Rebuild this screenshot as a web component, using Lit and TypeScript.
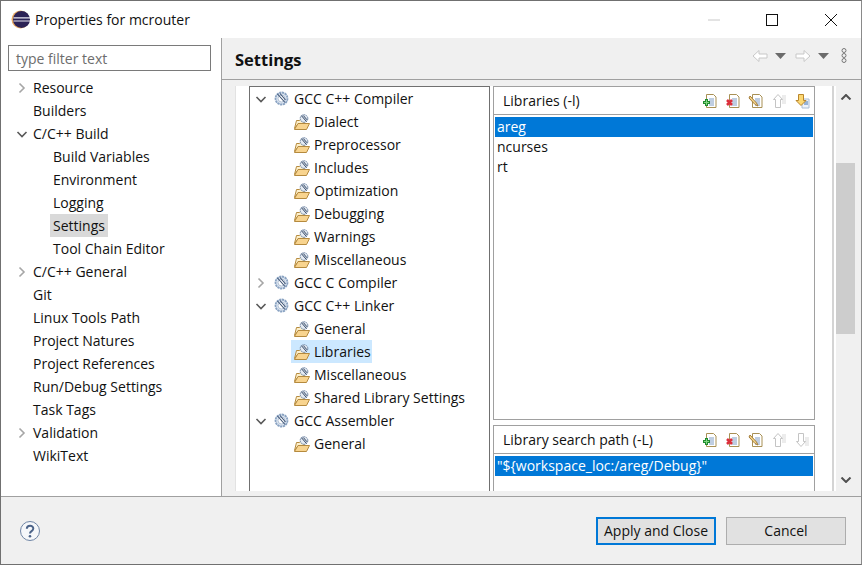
import { LitElement, css, html, svg } from "lit";
import { customElement } from "lit/decorators.js";

const chevronRight = html`<svg class="tw" width="12" height="12" viewBox="0 0 12 12"><path d="M3.500 1.500 8 6l-4.500 4.500" fill="none" stroke="#a6a6a6" stroke-width="1.600"/></svg>`;
const chevronDown = html`<svg class="tw" width="12" height="12" viewBox="0 0 12 12"><path d="M1.500 4 6 8.500 10.500 4" fill="none" stroke="#595959" stroke-width="1.600"/></svg>`;

const toolIcon = html`<svg class="ico" width="15" height="15" viewBox="0 0 15 15">
  <circle cx="7.500" cy="7.500" r="6" fill="#dbe4f0" stroke="#8aa3c2" stroke-width="1.800" stroke-dasharray="2.200 .6"/>
  <circle cx="7.500" cy="7.500" r="3.500" fill="#fff" stroke="#b4c3d6"/>
  <path d="M3.500 3 11 11.500M6 2.500l5.500 6.500" stroke="#3d5374" stroke-width="1.100"/>
</svg>`;

const optionIcon = html`<svg class="ico" width="16" height="16" viewBox="0 0 16 16">
  <path d="M.5 14.500 2.500 6.500h3L7 5h3v5H4z" fill="#fdf0cc" stroke="#b58a3e"/>
  <path d="M.5 15.500 4 9.500h11.500l-3 6z" fill="#f8d48f" stroke="#b58a3e"/>
  <circle cx="10" cy="4.500" r="3.800" fill="#e4eaf2" stroke="#6e85a3" stroke-dasharray="1.800 .6"/>
  <path d="M7.500 1.800 12.500 7.500M9.300 1.500l3.700 4.300" stroke="#2f4462"/>
</svg>`;

type Kind = "add" | "del" | "edit" | "up" | "down";

function actionIcon(kind: Kind, off = false) {
  const page = svg`
    <path d="M4.500 1.500h7l2.500 2.500v10.500H4.500z" fill="#fff" stroke="#a89055"/>
    <path d="M7 6h5M7 8h5M7 10h5M7 12h5" stroke="#7f9cc4"/>`;
  const hollow = "#c4c4c4";
  const glyph =
    kind === "add"
      ? svg`${page}<path d="M4.500 6v7M1 9.500h7" stroke="#1f8a2e" stroke-width="3"/><path d="M4.500 7v5M2 9.500h5" stroke="#7fd67f"/>`
      : kind === "del"
      ? svg`${page}<path d="M2 7l5 5M7 7l-5 5" stroke="#dc2f3c" stroke-width="2.600"/>`
      : kind === "edit"
      ? svg`${page}<path d="M2 3l6.500 7 1.500 3-3-1.500L1 5z" fill="#f5d58a" stroke="#a37c3a"/>`
      : kind === "up"
      ? svg`<path d="M11 2h4v9h-4z" fill="#ececec"/><path d="M7 1.500 11.500 6.500H9.500v8h-5v-8H2.500z" fill="#fff" stroke="${hollow}"/>`
      : off
      ? svg`<path d="M11 5h4v9h-4z" fill="#ececec"/><path d="M4.500 1.500h5v8h2L7 14.500 2.500 9.500h2z" fill="#fff" stroke="${hollow}"/>`
      : svg`<path d="M8 6h7v9H8z" fill="#eef3fa" stroke="#a9bcd6"/><path d="M10 9h4M10 11h4" stroke="#3f73b5"/><path d="M4.500 1.500h5v6h2.500L7 12.500 2 7.500h2.500z" fill="#fcd874" stroke="#b9862c"/>`;
  return html`<svg class="act" width="16" height="16" viewBox="0 0 16 16">${glyph}</svg>`;
}

const actions = (upOff: boolean, downOff: boolean) => html`
  <div class="actions">
    ${actionIcon("add")}${actionIcon("del")}${actionIcon("edit")}
    ${actionIcon("up", upOff)}${actionIcon("down", downOff)}
  </div>
`;

const navItems: [string, number, "r" | "d" | ""][] = [
  ["Resource", 0, "r"],
  ["Builders", 0, ""],
  ["C/C++ Build", 0, "d"],
  ["Build Variables", 1, ""],
  ["Environment", 1, ""],
  ["Logging", 1, ""],
  ["Settings", 1, ""],
  ["Tool Chain Editor", 1, ""],
  ["C/C++ General", 0, "r"],
  ["Git", 0, ""],
  ["Linux Tools Path", 0, ""],
  ["Project Natures", 0, ""],
  ["Project References", 0, ""],
  ["Run/Debug Settings", 0, ""],
  ["Task Tags", 0, ""],
  ["Validation", 0, "r"],
  ["WikiText", 0, ""],
];

const toolItems: [string, number, "r" | "d" | ""][] = [
  ["GCC C++ Compiler", 0, "d"],
  ["Dialect", 1, ""],
  ["Preprocessor", 1, ""],
  ["Includes", 1, ""],
  ["Optimization", 1, ""],
  ["Debugging", 1, ""],
  ["Warnings", 1, ""],
  ["Miscellaneous", 1, ""],
  ["GCC C Compiler", 0, "r"],
  ["GCC C++ Linker", 0, "d"],
  ["General", 1, ""],
  ["Libraries", 1, ""],
  ["Miscellaneous", 1, ""],
  ["Shared Library Settings", 1, ""],
  ["GCC Assembler", 0, "d"],
  ["General", 1, ""],
];

@customElement("app-root")
export class AppRoot extends LitElement {
  static styles = css`
    :host {
      display: block;
      width: 862px;
      height: 565px;
      font-family: "Open Sans", "Noto Sans", sans-serif;
      font-size: 14px;
      color: #111;
    }
    .window {
      box-sizing: border-box;
      width: 862px;
      height: 565px;
      border: 1px solid #707070;
      border-right-color: #8a8a8a;
      display: flex;
      flex-direction: column;
      background: #fff;
      overflow: hidden;
    }
    .title {
      height: 37px;
      flex: none;
      display: flex;
      align-items: center;
      padding: 0 1px 0 10px;
    }
    .title .name {
      flex: 1;
      margin-left: 5px;
    }
    .caption {
      width: 58.500px;
      height: 37px;
      display: flex;
      align-items: center;
      justify-content: center;
    }
    .body {
      flex: 1;
      display: flex;
      min-height: 0;
    }
    .left {
      width: 220px;
      flex: none;
      border-right: 1px solid #a0a0a0;
      padding-top: 7px;
    }
    .filter {
      box-sizing: border-box;
      margin-left: 7px;
      width: 203px;
      height: 26px;
      border: 1px solid #7a7a7a;
      padding-left: 7px;
      line-height: 26px;
      color: #6d6d6d;
    }
    .rows {
      margin-top: 5px;
    }
    .row {
      height: 23px;
      display: flex;
      align-items: center;
      white-space: nowrap;
    }
    .left .row {
      padding-left: 15px;
    }
    .left .row.sub {
      padding-left: 52px;
    }
    .tw {
      width: 12px;
      flex: none;
      margin-right: 5px;
    }
    .nt {
      width: 17px;
      flex: none;
    }
    .sel-gray {
      background: #d9d9d9;
      line-height: 23px;
      padding: 0 3px;
      margin-left: -3px;
    }
    .right {
      flex: 1;
      min-width: 0;
      display: flex;
      flex-direction: column;
    }
    .head {
      box-sizing: border-box;
      height: 42px;
      flex: none;
      background: #f0f0f0;
      border-bottom: 1px solid #a0a0a0;
      display: flex;
      align-items: center;
      padding: 1px 14px 0 13px;
    }
    .head h1 {
      flex: 1;
      margin: 0;
      font-size: 16.500px;
      font-weight: 700;
    }
    .nav {
      display: flex;
      align-items: center;
      margin-top: -7px;
    }
    .nav .caret {
      margin: 0 9px 0 7px;
    }
    .nav .dots {
      margin-left: 3px;
    }
    .content {
      flex: 1;
      min-height: 0;
      display: flex;
      background: #f0f0f0;
      padding: 6px 6px 5px 13px;
    }
    .pane {
      width: 601px;
      box-sizing: border-box;
      flex: none;
      display: flex;
      background: #fff;
      border-left: 1px solid #e2e2e2;
      padding-left: 13px;
      overflow: hidden;
    }
    .tools {
      width: 241px;
      flex: none;
      box-sizing: border-box;
      border: 1px solid #707070;
      border-bottom: none;
    }
    .tools .row {
      padding-left: 5px;
    }
    .tools .row .tw {
      margin-right: 7px;
    }
    .tools .row.sub {
      padding-left: 44px;
    }
    .ico {
      flex: none;
      margin-right: 5px;
    }
    .sub .ico {
      margin-right: 4px;
    }
    .hl {
      display: flex;
      align-items: center;
      height: 23px;
      background: #cce8ff;
      margin-left: -3px;
      padding: 0 1px 0 3px;
    }
    .lists {
      width: 322px;
      flex: none;
      margin-left: 3px;
      display: flex;
      flex-direction: column;
      gap: 5px;
    }
    .edge {
      width: 2px;
      flex: none;
      margin-left: 17px;
      background: #d4d4d4;
    }
    .group {
      box-sizing: border-box;
      border: 1px solid #a0a0a0;
      display: flex;
      flex-direction: column;
    }
    .group.libs {
      height: 334px;
      flex: none;
    }
    .group.paths {
      flex: 1;
      border-bottom: none;
    }
    .ghead {
      height: 27px;
      flex: none;
      display: flex;
      align-items: center;
      justify-content: space-between;
      padding-left: 9px;
      border-bottom: 1px solid #a0a0a0;
    }
    .actions {
      display: flex;
      gap: 7px;
      padding-right: 4px;
    }
    .act {
      flex: none;
    }
    .items {
      padding: 2px 1px 0;
    }
    .item {
      height: 20px;
      line-height: 20px;
      padding-left: 2px;
    }
    .item.on {
      background: #0078d7;
      color: #fff;
    }
    .scroll {
      width: 19px;
      flex: none;
      display: flex;
      flex-direction: column;
      align-items: center;
    }
    .scroll .thumb {
      width: 100%;
      height: 171px;
      margin-top: 55px;
      background: #cdcdcd;
      flex: none;
    }
    .scroll .grow {
      flex: 1;
    }
    .scroll svg {
      flex: none;
      margin: 8px 0;
    }
    .foot {
      height: 68px;
      flex: none;
      box-sizing: border-box;
      background: #f0f0f0;
      border-top: 1px solid #a0a0a0;
      display: flex;
      align-items: center;
      padding: 0 15px 0 19px;
      gap: 10px;
    }
    .help {
      flex: 1;
      display: flex;
    }
    .btn {
      box-sizing: border-box;
      height: 28px;
      width: 120px;
      border: 1px solid #adadad;
      background: #e1e1e1;
      display: flex;
      align-items: center;
      justify-content: center;
    }
    .btn.primary {
      border: 2px solid #0078d7;
    }
  `;

  render() {
    return html`
      <div class="window">
        <div class="title">
          <svg width="19" height="19" viewBox="0 0 19 19">
            <circle cx="9.500" cy="9.500" r="9" fill="#e8a860"/>
            <circle cx="10.500" cy="9.500" r="8.500" fill="#2c2255"/>
            <path d="M2.500 7.800h16.500M2.500 11h16.500" stroke="#e8e6f0" stroke-width="1.200"/>
          </svg>
          <span class="name">Properties for mcrouter</span>
          <div class="caption">
            <svg width="12" height="12" viewBox="0 0 12 12"><path d="M0 6h12" stroke="#c8c8c8"/></svg>
          </div>
          <div class="caption">
            <svg width="12" height="12" viewBox="0 0 12 12"><rect x=".5" y=".5" width="11" height="11" fill="none" stroke="#111"/></svg>
          </div>
          <div class="caption">
            <svg width="12" height="12" viewBox="0 0 12 12"><path d="M0 0l12 12M12 0 0 12" stroke="#111"/></svg>
          </div>
        </div>
        <div class="body">
          <div class="left">
            <div class="filter">type filter text</div>
            <div class="rows">
              ${navItems.map(
                ([label, depth, tw]) => html`
                  <div class="row ${depth ? "sub" : ""}">
                    ${tw === "r" ? chevronRight : tw === "d" ? chevronDown : depth ? "" : html`<span class="nt"></span>`}
                    <span class="${label === "Settings" ? "sel-gray" : ""}">${label}</span>
                  </div>
                `
              )}
            </div>
          </div>
          <div class="right">
            <div class="head">
              <h1>Settings</h1>
              <div class="nav">
                <svg width="16" height="14" viewBox="0 0 16 14"><path d="M1 7l6-5.500V5h8v4H7v3.500z" fill="#fff" stroke="#c8c8c8"/></svg>
                <svg class="caret" width="11" height="6" viewBox="0 0 11 6"><path d="M0 0h11L5.500 6z" fill="#6b6b6b"/></svg>
                <svg width="16" height="14" viewBox="0 0 16 14"><path d="M15 7 9 1.500V5H1v4h8v3.500z" fill="#fff" stroke="#c8c8c8"/></svg>
                <svg class="caret" width="11" height="6" viewBox="0 0 11 6"><path d="M0 0h11L5.500 6z" fill="#6b6b6b"/></svg>
                <svg class="dots" width="6" height="15" viewBox="0 0 6 15"><circle cx="3" cy="2.500" r="2" fill="none" stroke="#777"/><circle cx="3" cy="7.500" r="2" fill="none" stroke="#777"/><circle cx="3" cy="12.500" r="2" fill="none" stroke="#777"/></svg>
              </div>
            </div>
            <div class="content">
              <div class="pane">
                <div class="tools">
                  ${toolItems.map(
                    ([label, depth, tw]) => html`
                      <div class="row ${depth ? "sub" : ""}">
                        ${tw === "r" ? chevronRight : tw === "d" ? chevronDown : ""}
                        ${label === "Libraries"
                          ? html`<span class="hl">${optionIcon}<span>${label}</span></span>`
                          : html`${depth ? optionIcon : toolIcon}<span>${label}</span>`}
                      </div>
                    `
                  )}
                </div>
                <div class="lists">
                  <div class="group libs">
                    <div class="ghead"><span>Libraries (-l)</span>${actions(true, false)}</div>
                    <div class="items">
                      <div class="item on">areg</div>
                      <div class="item">ncurses</div>
                      <div class="item">rt</div>
                    </div>
                  </div>
                  <div class="group paths">
                    <div class="ghead"><span>Library search path (-L)</span>${actions(true, true)}</div>
                    <div class="items">
                      <div class="item on">"\${workspace_loc:/areg/Debug}"</div>
                    </div>
                  </div>
                </div>
                <div class="edge"></div>
              </div>
              <div class="scroll">
                <svg width="12" height="6" viewBox="0 0 12 6"><path d="M1.500 5.500 6 1l4.500 4.500" fill="none" stroke="#505050" stroke-width="2"/></svg>
                <div class="thumb"></div>
                <div class="grow"></div>
                <svg width="12" height="6" viewBox="0 0 12 6"><path d="M1.500.5 6 5l4.500-4.500" fill="none" stroke="#505050" stroke-width="2"/></svg>
              </div>
            </div>
          </div>
        </div>
        <div class="foot">
          <div class="help">
            <svg width="20" height="20" viewBox="0 0 20 20">
              <circle cx="10" cy="10" r="9.500" fill="#f5f7fa" stroke="#6f85a5"/>
              <path d="M6.800 7.800C7 3.800 13.300 3.800 13.300 7.500c0 2.700-3.300 2.500-3.300 5" fill="none" stroke="#4a6288" stroke-width="2"/>
              <circle cx="10" cy="15.300" r="1.300" fill="#4a6288"/>
            </svg>
          </div>
          <div class="btn primary">Apply and Close</div>
          <div class="btn">Cancel</div>
        </div>
      </div>
    `;
  }
}
